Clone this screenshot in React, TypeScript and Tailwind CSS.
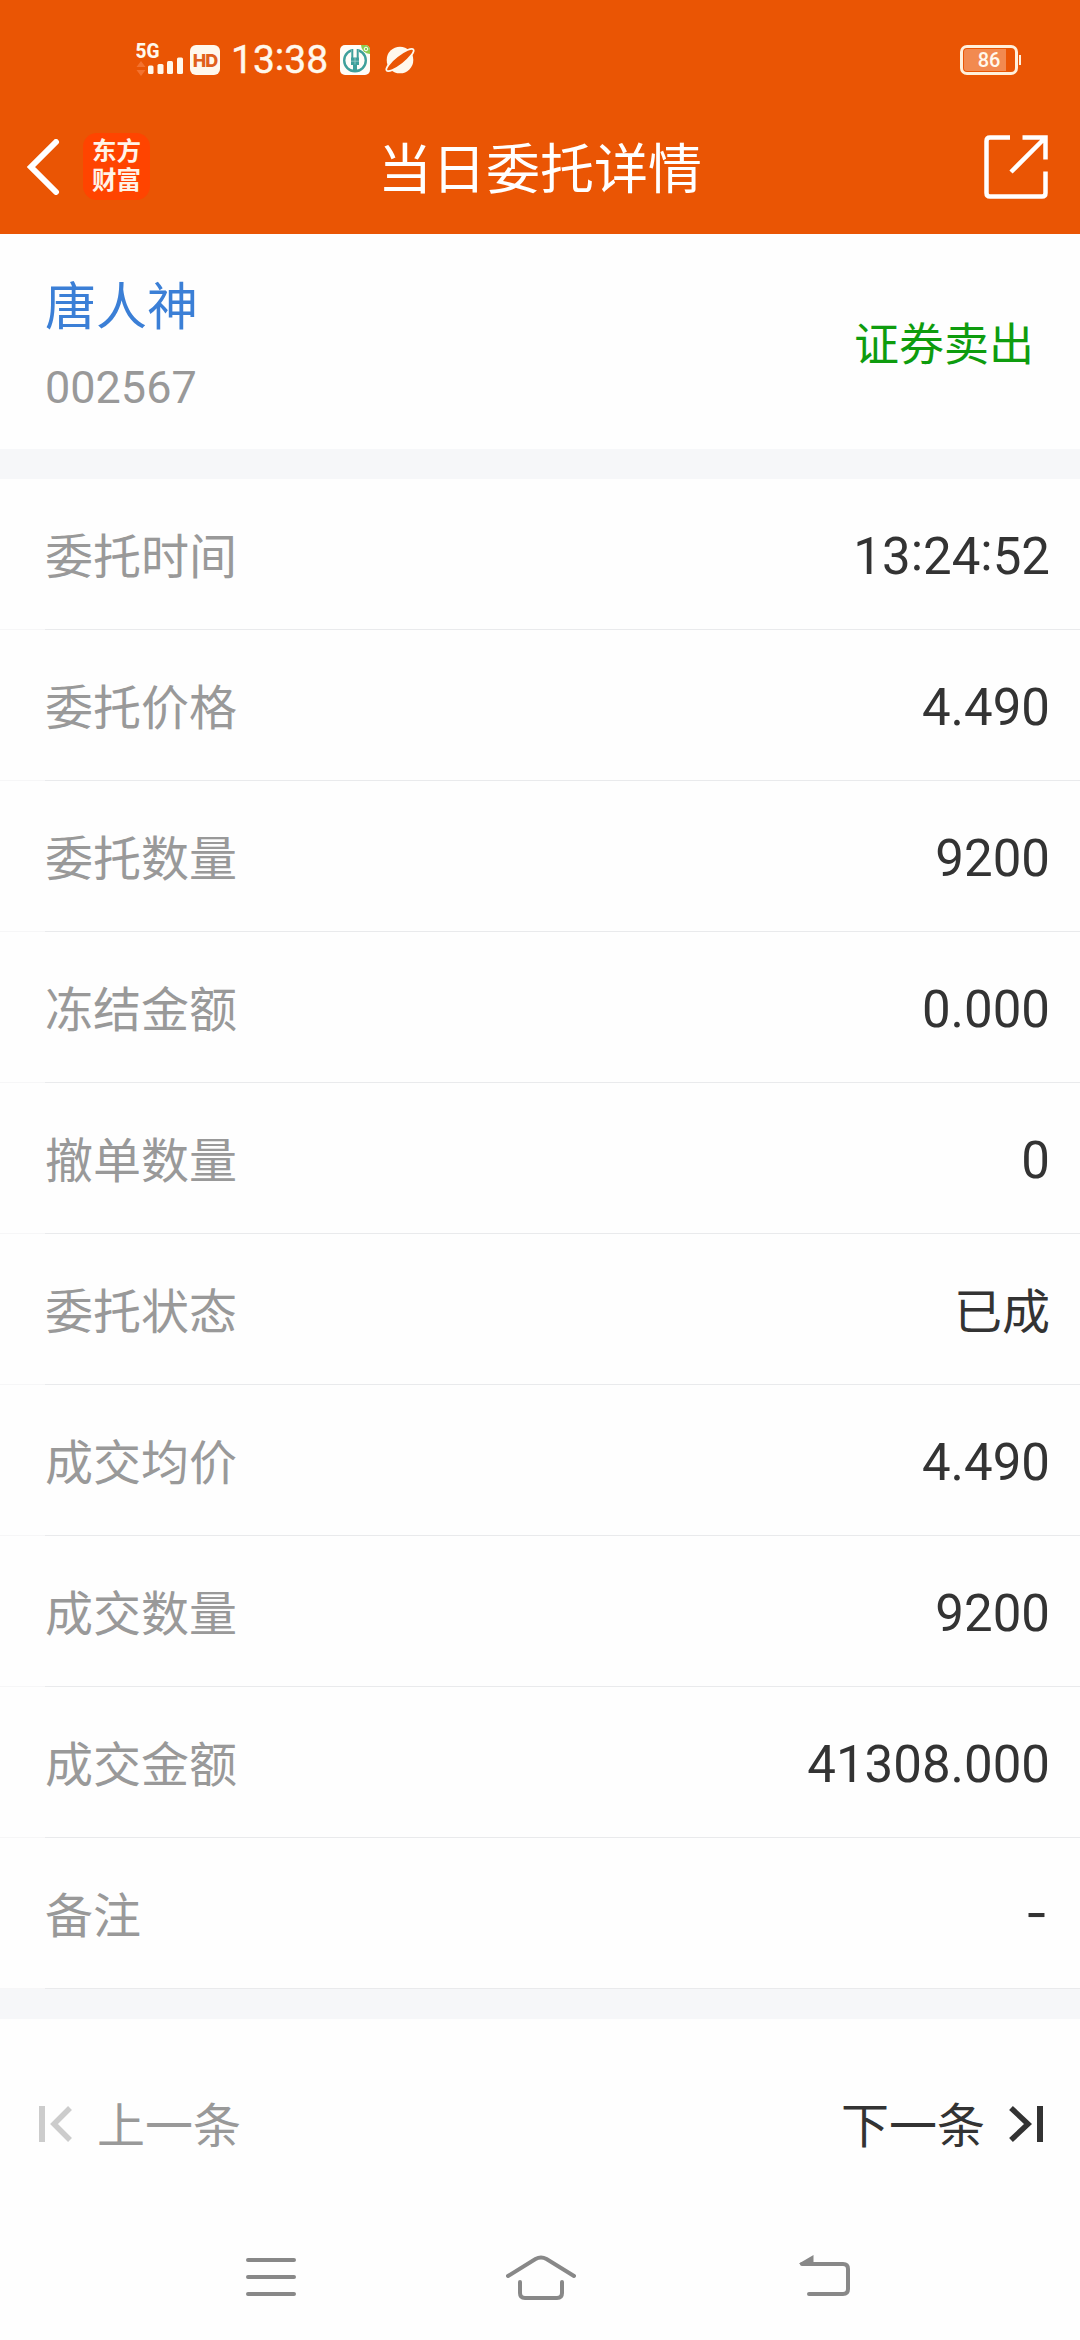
const details = [
  { label: "委托时间", value: "13:24:52" },
  { label: "委托价格", value: "4.490" },
  { label: "委托数量", value: "9200" },
  { label: "冻结金额", value: "0.000" },
  { label: "撤单数量", value: "0" },
  { label: "委托状态", value: "已成", className: "text-[48px]" },
  { label: "成交均价", value: "4.490" },
  { label: "成交数量", value: "9200" },
  { label: "成交金额", value: "41308.000" },
  { label: "备注", value: "-", className: "font-[Inter] text-[50px] pr-[2px] pb-[7px]" },
]

// Colons sit on the baseline in Roboto, so lift them to the middle of the digits
function Digits({ text }: { text: string }) {
  return (
    <>
      {text.split(/(:)/).map((part, i) =>
        part === ":" ? (
          <span key={i} className="relative -top-[0.09em]">
            :
          </span>
        ) : (
          part
        )
      )}
    </>
  )
}

function SignalIcon() {
  return (
    <svg className="shrink-0" width="50" height="40" viewBox="0 0 50 40" fill="#fff8ec">
      <text x="-0.5" y="17.500" fontSize="20" fontWeight="800" textLength="24" lengthAdjust="spacingAndGlyphs">5G</text>
      <path d="M5 21l4.500 6h-9zM5 36l4.500-6h-9z" fill="#f3722f" />
      <rect x="12" y="25.500" width="5.500" height="8.500" rx="1.500" />
      <rect x="21.500" y="24" width="6" height="10" rx="1.500" />
      <rect x="31" y="21" width="6" height="13" rx="1.500" />
      <rect x="41" y="17.500" width="6" height="16.500" rx="1.500" />
    </svg>
  )
}

function BankIcon() {
  return (
    <svg width="30" height="30" viewBox="0 0 30 30">
      <rect width="30" height="30" rx="5" fill="#fffdf8" />
      <path d="M21 0h4a5 5 0 0 1 5 5v4a9 9 0 0 1-9-9z" fill="#8ccc50" />
      <circle cx="26" cy="4" r="1.800" fill="none" stroke="#fff" strokeWidth="1" />
      <circle cx="15" cy="15.500" r="10.800" fill="none" stroke="#3fa09b" strokeWidth="2.400" />
      <path d="M15 2v10" stroke="#fffdf8" strokeWidth="7.500" />
      <path d="M12.300 4v9M17.700 4v9" stroke="#3fa09b" strokeWidth="2" />
      <path d="M11 12.500h8v7.500h-2v6h-4v-6h-2z" fill="#3fa09b" />
      <path d="M11 16.200h8M15 12.500v7" stroke="#b9dcd8" strokeWidth="0.600" />
    </svg>
  )
}

function PlanetIcon() {
  return (
    <svg width="32" height="32" viewBox="0 0 32 32">
      <circle cx="16" cy="16" r="13.300" fill="#fff8ec" />
      <ellipse
        cx="16"
        cy="16"
        rx="17"
        ry="4.600"
        transform="rotate(-38 16 16)"
        fill="#ea5504"
        stroke="#fff8ec"
        strokeWidth="1.800"
      />
    </svg>
  )
}

function StatusBar() {
  return (
    <div className="flex h-[100px] items-center pr-[59px] pl-[136px] pt-[20px] text-[#fff8ec]">
      <SignalIcon />
      <div className="ml-1 flex h-[30px] w-[30px] shrink-0 items-center justify-center rounded-[6px] bg-[#fff8ec] font-[Inter] text-[18px] font-extrabold tracking-[-1px] text-[#e0601c]">
        HD
      </div>
      <span className="ml-[11px] w-[99px] pt-px text-[39px] [-webkit-text-stroke:0.4px_#fff8ec]">
        <Digits text="13:38" />
      </span>
      <span className="ml-[10px]">
        <BankIcon />
      </span>
      <span className="ml-[14px]">
        <PlanetIcon />
      </span>
      <div className="ml-auto flex items-center">
        <div className="relative flex h-[30px] w-[58px] items-center justify-center rounded-[7px] border-[3px] border-[#fff0dc]">
          <div className="absolute inset-y-px left-px w-[42px] rounded-l-[3px] bg-[#f28a50]" />
          <span className="relative text-[20px] font-medium">86</span>
        </div>
        <div className="ml-px h-[10px] w-[2px] bg-[#fff0dc]" />
      </div>
    </div>
  )
}

function TitleBar() {
  return (
    <div className="flex h-[134px] items-center justify-between px-[26px] pb-px">
      <div className="flex w-[150px] items-center">
        <svg width="34" height="56" viewBox="0 0 34 56" fill="none" stroke="#fff" strokeWidth="6">
          <path d="M30 3L5 28l25 25" strokeLinecap="round" />
        </svg>
        <div className="ml-[23px] flex h-[67px] w-[67px] flex-col items-center justify-center rounded-[14px] bg-[#ff4400] pb-px text-[24.5px] leading-[29px] font-bold text-[#fff4e8]">
          <span>东方</span>
          <span>财富</span>
        </div>
      </div>
      <h1 className="pt-[9px] text-[54px] leading-none text-white">当日委托详情</h1>
      <div className="flex w-[150px] justify-end pr-[6px]">
        <svg width="64" height="64" viewBox="0 0 64 64" fill="none" stroke="#fff" strokeWidth="4.500">
          <path d="M26 2.500H6Q2.500 2.500 2.500 6v52q0 3.500 3.500 3.500h52q3.500 0 3.500-3.500V36.500" />
          <path d="M38.500 2.500h23v22M61 3L27 37" />
        </svg>
      </div>
    </div>
  )
}

function DetailRow({ label, value, className = "text-[51px]" }: { label: string; value: string; className?: string }) {
  return (
    <div className="flex h-[151px]">
      <div className="w-[45px] border-b border-[#f6f6f7]" />
      <div className="flex flex-1 items-center justify-between border-b border-[#e9eaec] pt-[7px] pr-[30px]">
        <span className="text-[48px] text-[#999]">{label}</span>
        <span className={`text-[#333] ${className}`}>
          <Digits text={value} />
        </span>
      </div>
    </div>
  )
}

function NavBar() {
  return (
    <div className="flex h-[126px] items-center pl-[246px]">
      <svg width="50" height="46" viewBox="0 0 50 46" stroke="#888" strokeWidth="4" strokeLinecap="round">
        <path d="M2 6h46M2 23h46M2 40h46" />
      </svg>
      <svg className="ml-[210px]" width="70" height="46" viewBox="0 0 70 46" fill="none" stroke="#888" strokeWidth="4" strokeLinecap="round">
        <path d="M2 22L29.500 5q5.500-3 11 0L68 22" />
        <path d="M14 28v11q0 5 5 5h32q5 0 5-5V28" />
      </svg>
      <svg className="ml-[223px]" width="51" height="46" viewBox="0 0 51 46" fill="none" stroke="#888" strokeWidth="4" strokeLinecap="round">
        <path d="M3 10h41q5 0 5 5v20q0 5-5 5H10" />
        <path d="M0 9.500L14.500 1v10H2z" fill="#888" stroke="none" />
      </svg>
    </div>
  )
}

export default function App() {
  return (
    <div className="flex h-[2340px] w-[1080px] flex-col bg-[#fefefe] font-[Roboto,'Noto_Sans_CJK_SC',sans-serif] whitespace-nowrap">
      <header className="h-[234px] bg-[#ea5504]">
        <StatusBar />
        <TitleBar />
      </header>

      <section className="flex h-[215px] items-center justify-between pt-[8px] pr-[46px] pl-[45px]">
        <div className="pt-[5px]">
          <div className="text-[51px] leading-[80px] text-[#3b7fd6]">唐人神</div>
          <div className="text-[45px] leading-[80px] text-[#999]">002567</div>
        </div>
        <span className="text-[45px] text-[#0e9c0e]">证券卖出</span>
      </section>
      <div className="h-[30px] bg-[#f6f7f9]" />

      <section>
        {details.map((item) => (
          <DetailRow key={item.label} {...item} />
        ))}
      </section>
      <div className="h-[30px] bg-[#f6f7f9]" />

      <div className="flex h-[195px] items-center justify-between pt-[14px] pr-[37px] pl-[39px] text-[48px]">
        <button className="flex items-center text-[#999]">
          <svg width="34" height="36" viewBox="0 0 34 36" fill="none" stroke="#ccc">
            <path d="M3 0v36" strokeWidth="6" />
            <path d="M31 2L15 18l16 16" strokeWidth="5.500" />
          </svg>
          <span className="ml-6 pt-[7px]">上一条</span>
        </button>
        <button className="flex items-center text-[#333]">
          <span className="mr-6 pt-[7px]">下一条</span>
          <svg width="34" height="36" viewBox="0 0 34 36" fill="none" stroke="#333">
            <path d="M31 0v36" strokeWidth="6" />
            <path d="M2 2l17 16L2 34" strokeWidth="5.500" />
          </svg>
        </button>
      </div>
      <NavBar />
    </div>
  )
}
